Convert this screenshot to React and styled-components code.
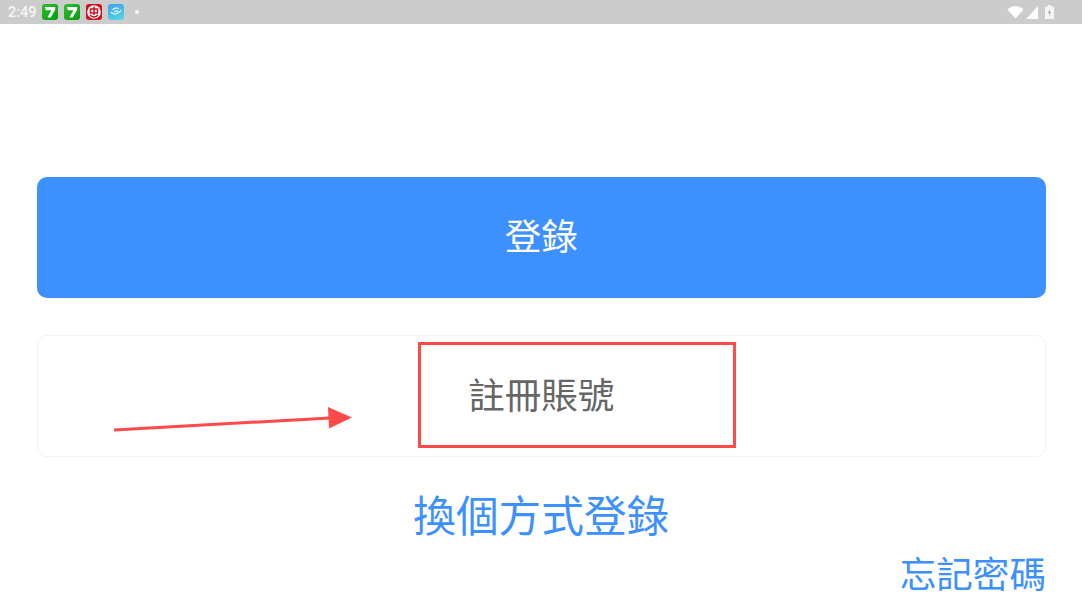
import React from 'react';
import styled, { createGlobalStyle } from 'styled-components';

const GlobalStyle = createGlobalStyle`
  html, body {
    margin: 0;
    padding: 0;
    background: #fff;
    overflow: hidden;
  }
  * {
    box-sizing: border-box;
  }
`;

const FONT = `"Noto Sans CJK SC", "Noto Sans CJK TC", "Noto Sans", sans-serif`;

const App = () => (
  <Page>
    <GlobalStyle />
    <StatusBar>
      <StatusLeft>
        <Clock>2:49</Clock>
        <SevenIcon />
        <SevenIcon />
        <RedIcon />
        <BlueIcon />
        <Dot />
      </StatusLeft>
      <StatusRight>
        <svg width="17" height="13" viewBox="0 0 17 13">
          <path d="M0.500 3.500 C5 -0.800 12 -0.800 16.500 3.500 L8.500 12.500 Z" fill="#fff" />
        </svg>
        <svg width="12" height="13" viewBox="0 0 12 13">
          <path d="M12 0 V13 H0 Z" fill="#fff" />
        </svg>
        <BatteryIcon width="9" height="14" viewBox="0 0 9 14">
          <path d="M3 0 H6 V1.500 H9 V14 H0 V1.500 H3 Z" fill="#f4f4f4" />
          <path d="M4.800 4 L3 8 H4.200 V11 L6 7 H4.800 Z" fill="#a8a8a8" />
        </BatteryIcon>
      </StatusRight>
    </StatusBar>

    <Content>
      <PrimaryButton>
        <ButtonLabel>登錄</ButtonLabel>
      </PrimaryButton>
      <RegisterCard>
        <ButtonLabel>註冊賬號</ButtonLabel>
        <HighlightBox />
        <ArrowMark viewBox="0 0 240 30" width="240" height="30">
          <line x1="0" y1="22" x2="216" y2="10" stroke="#ff4a4a" strokeWidth="3" />
          <path d="M214 -1 L238 9.500 L215 20.500 Z" fill="#ff4a4a" />
        </ArrowMark>
      </RegisterCard>
      <SwitchLink>換個方式登錄</SwitchLink>
      <ForgotLink>忘記密碼</ForgotLink>
    </Content>
  </Page>
);

export default App;

const SevenIcon = () => (
  <AppIcon $bg="linear-gradient(135deg, #2cc02c, #079a0f)">
    <svg width="16" height="16" viewBox="0 0 16 16">
      <path d="M2.800 3 H13.200 V5.800 L8.600 13.500 H5.400 L9.400 6.200 H4 Z" fill="#fff" />
    </svg>
  </AppIcon>
);

const RedIcon = () => (
  <AppIcon $bg="#d40f22">
    <svg width="16" height="16" viewBox="0 0 16 16">
      <circle cx="8" cy="8" r="6.800" fill="#fff" />
      <path d="M4.500 5 H11.500 V9 H4.500 Z M8 2.500 V11 M4 11 C6 13.500 10 13.500 12 11" fill="none" stroke="#d40f22" strokeWidth="1.500" />
    </svg>
  </AppIcon>
);

const BlueIcon = () => (
  <AppIcon $bg="linear-gradient(160deg, #3f9fe8, #56dbe0)">
    <svg width="16" height="16" viewBox="0 0 16 16">
      <path d="M3 8 C5 11 10 11 13 6 M4.500 6 C6 4 9 3.500 11 4.500 M6.500 8 C7.500 7 9 6.800 10 7.500" fill="none" stroke="#e8f8ff" strokeWidth="1.200" />
    </svg>
  </AppIcon>
);

const Page = styled.div`
  width: 1082px;
  height: 609px;
  background: #fff;
  font-family: ${FONT};
  overflow: hidden;
`;

const StatusBar = styled.div`
  height: 24px;
  background: #cccccc;
  display: flex;
  align-items: center;
  justify-content: space-between;
  padding: 0 28px 0 8px;
`;

const StatusLeft = styled.div`
  display: flex;
  align-items: center;
  gap: 6px;
`;

const StatusRight = styled.div`
  display: flex;
  align-items: center;
  gap: 2px;
`;

const BatteryIcon = styled.svg`
  margin-left: 5px;
`;

const Clock = styled.span`
  width: 28px;
  font-family: Roboto, sans-serif;
  font-size: 14.500px;
  font-weight: 500;
  color: #f6f6f6;
  white-space: nowrap;
`;

const AppIcon = styled.span`
  width: 16px;
  height: 16px;
  border-radius: 3px;
  background: ${(p) => p.$bg};
  display: block;
  svg {
    display: block;
  }
`;

const Dot = styled.span`
  width: 4px;
  height: 4px;
  border-radius: 50%;
  background: #f6f6f6;
  margin-left: 5px;
`;

const Content = styled.div`
  padding: 153px 36px 0 36.500px;
  display: flex;
  flex-direction: column;
`;

const PrimaryButton = styled.div`
  height: 121px;
  background: #3d90ff;
  border-radius: 10px;
  color: #fff;
  font-size: 36.570px;
  display: flex;
  align-items: center;
  justify-content: center;
`;

const ButtonLabel = styled.span`
  margin-bottom: 6px;
`;

const RegisterCard = styled.div`
  position: relative;
  height: 122px;
  margin-top: 37px;
  border: 1px solid #f3f3f3;
  border-radius: 10px;
  color: #666;
  font-size: 36.570px;
  display: flex;
  align-items: center;
  justify-content: center;
`;

const HighlightBox = styled.div`
  position: absolute;
  left: 380.500px;
  top: 6px;
  width: 318px;
  height: 106px;
  border: 3px solid #ff4a4a;
`;

const ArrowMark = styled.svg`
  position: absolute;
  left: 76.500px;
  top: 72px;
  overflow: visible;
`;

const SwitchLink = styled.div`
  margin-top: 27px;
  color: #3d90ff;
  font-size: 42.670px;
  line-height: 60px;
  text-align: center;
`;

const ForgotLink = styled.div`
  color: #3d90ff;
  font-size: 36.570px;
  line-height: 58px;
  text-align: right;
`;
